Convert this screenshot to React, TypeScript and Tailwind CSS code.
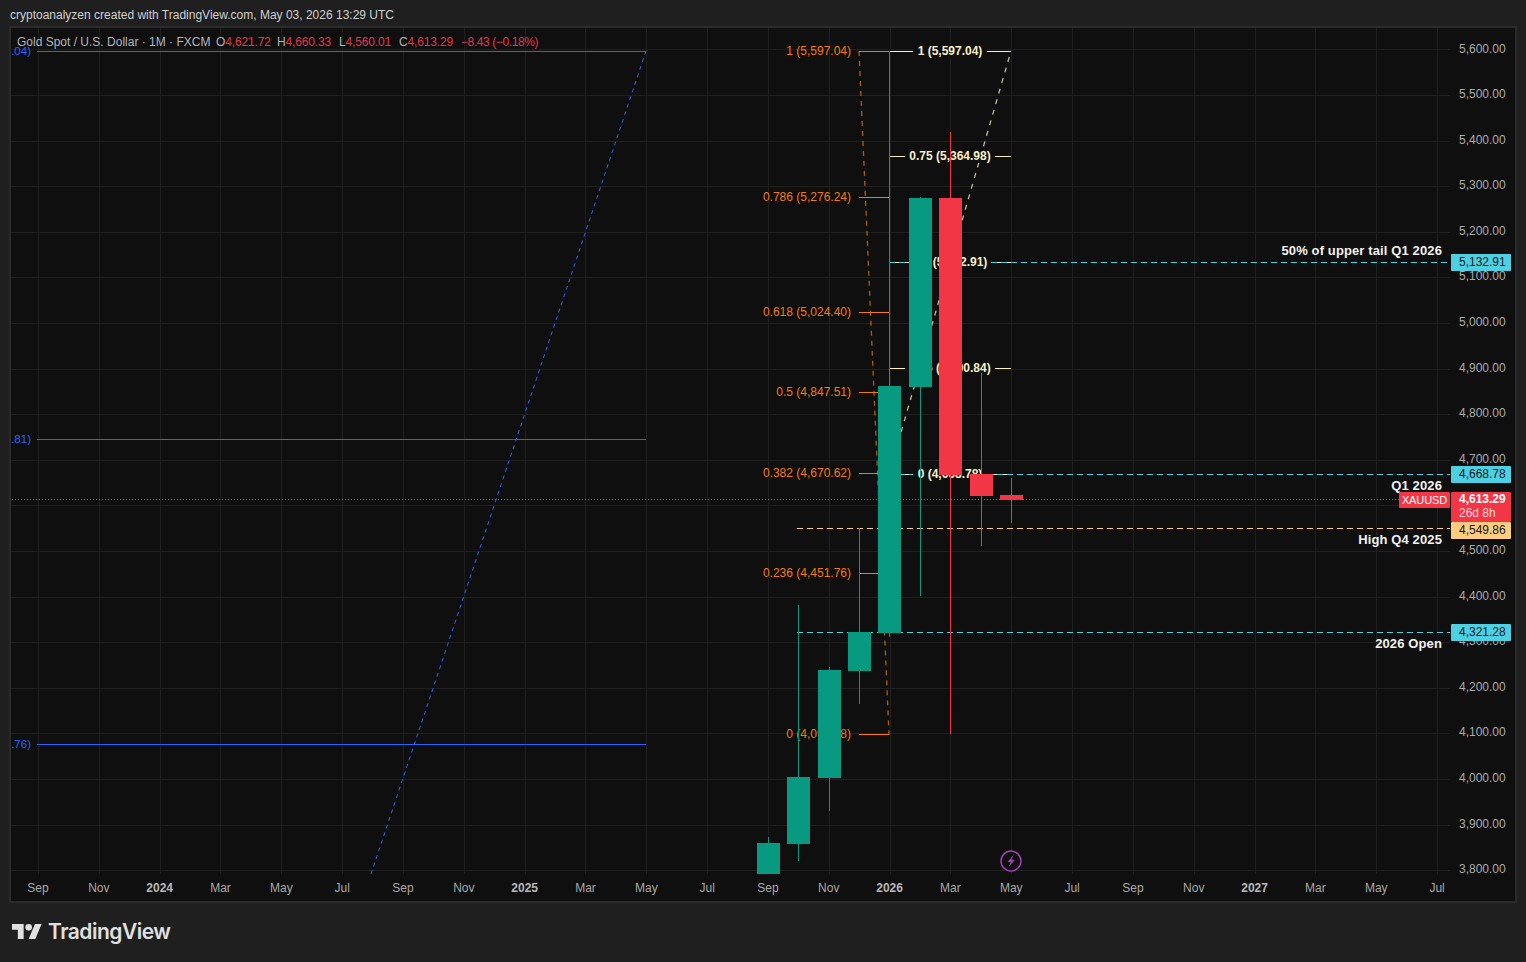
const FONT = "font-['Liberation_Sans',Arial,sans-serif]";

const prices = ['5,600.00','5,500.00','5,400.00','5,300.00','5,200.00','5,100.00','5,000.00','4,900.00','4,800.00','4,700.00','4,600.00','4,500.00','4,400.00','4,300.00','4,200.00','4,100.00','4,000.00','3,900.00','3,800.00'];
const months = ['Sep','Nov','2024','Mar','May','Jul','Sep','Nov','2025','Mar','May','Jul','Sep','Nov','2026','Mar','May','Jul','Sep','Nov','2027','Mar','May','Jul'];

const GREEN = '#089981';
const RED = '#f23645';
const ORANGE = '#f57c00';
const CREAM = '#f7f1c8';
const CYAN = '#4dd0e1';
const BLUE = '#2962ff';

// x, wick top, wick bottom, body top, body bottom
const candles = [
  { x: 768, wt: 837, wb: 874, bt: 843, bb: 874, c: GREEN },
  { x: 798, wt: 605, wb: 861, bt: 777, bb: 844, c: GREEN },
  { x: 829, wt: 667, wb: 811, bt: 670, bb: 778, c: GREEN },
  { x: 859, wt: 528, wb: 704, bt: 632, bb: 671, c: GREEN },
  { x: 889, wt: 51, wb: 637, bt: 386, bb: 633, c: GREEN },
  { x: 920, wt: 197, wb: 596, bt: 198, bb: 387, c: GREEN },
  { x: 950, wt: 132, wb: 734, bt: 198, bb: 475, c: RED },
  { x: 981, wt: 373, wb: 546, bt: 474, bb: 496, c: RED },
  { x: 1011, wt: 478, wb: 523, bt: 495, bb: 500, c: RED },
];

const orangeFib = [
  { y: 51, t: '1 (5,597.04)' },
  { y: 197, t: '0.786 (5,276.24)' },
  { y: 312, t: '0.618 (5,024.40)' },
  { y: 392, t: '0.5 (4,847.51)' },
  { y: 473, t: '0.382 (4,670.62)' },
  { y: 573, t: '0.236 (4,451.76)' },
  { y: 734, t: '0 (4,097.98)' },
];

const creamFib = [
  { y: 51, t: '1 (5,597.04)', a: 913, b: 987 },
  { y: 156, t: '0.75 (5,364.98)', a: 905, b: 995 },
  { y: 262, t: '0.5 (5,132.91)', a: 909, b: 991 },
  { y: 368, t: '0.25 (4,900.84)', a: 905, b: 995 },
  { y: 474, t: '0 (4,668.78)', a: 913, b: 987 },
];

const notes = [
  { y: 250, t: '50% of upper tail Q1 2026' },
  { y: 485, t: 'Q1 2026' },
  { y: 539, t: 'High Q4 2025' },
  { y: 643, t: '2026 Open' },
];

function Chart() {
  return (
    <svg width="1439" height="846" viewBox="11 28 1439 846" className="block">
      <g stroke="#1f1f1f" strokeWidth="1" shapeRendering="crispEdges">
        {prices.map((_, i) => {
          const y = Math.round(49.3 + i * 45.6) + 0.5;
          return <line key={i} x1="11" x2="1450" y1={y} y2={y} />;
        })}
        {months.map((_, i) => {
          const x = Math.round(38 + i * 60.83) + 0.5;
          return <line key={i} x1={x} x2={x} y1="28" y2="874" />;
        })}
      </g>

      {/* left fib */}
      <g stroke={BLUE} strokeWidth="1">
        <line x1="37" x2="646" y1="51.5" y2="51.5" shapeRendering="crispEdges" />
        <line x1="37" x2="646" y1="439.5" y2="439.5" shapeRendering="crispEdges" />
        <line x1="37" x2="646" y1="744.5" y2="744.5" shapeRendering="crispEdges" />
        <line x1="371" y1="874" x2="646" y2="51" strokeDasharray="4 4" />
      </g>
      <g fill={BLUE} fontSize="11.5" textAnchor="end" dominantBaseline="central">
        <text x="31" y="51">.04)</text>
        <text x="31" y="439">.81)</text>
        <text x="31" y="744">.76)</text>
      </g>

      <line x1="12" x2="1450" y1="499.5" y2="499.5" stroke={RED} strokeDasharray="1 2" shapeRendering="crispEdges" />

      {/* orange fib */}
      <line x1="859" y1="51" x2="889" y2="734" stroke={ORANGE} strokeOpacity="0.7" strokeWidth="1.3" strokeDasharray="5 5" />
      {orangeFib.map((f) => (
        <g key={f.y}>
          <line x1="859" x2="889" y1={f.y + 0.5} y2={f.y + 0.5} stroke={ORANGE} shapeRendering="crispEdges" />
          <text x="851" y={f.y} fill={ORANGE} fontSize="12" textAnchor="end" dominantBaseline="central">{f.t}</text>
        </g>
      ))}

      {/* cream fib */}
      <line x1="889" y1="474" x2="1011" y2="51" stroke={CREAM} strokeOpacity="0.75" strokeWidth="1.3" strokeDasharray="5 6" />
      {creamFib.map((f) => (
        <g key={f.y}>
          <rect x={f.a} y={f.y - 7} width={f.b - f.a} height="14" fill="#0f0f0f" />
          <line x1="889" x2={f.a} y1={f.y + 0.5} y2={f.y + 0.5} stroke={CREAM} shapeRendering="crispEdges" />
          <line x1={f.b} x2="1011" y1={f.y + 0.5} y2={f.y + 0.5} stroke={CREAM} shapeRendering="crispEdges" />
          <text x="950" y={f.y} fill={CREAM} fontSize="12" fontWeight="700" textAnchor="middle" dominantBaseline="central">{f.t}</text>
        </g>
      ))}

      {/* levels */}
      <g strokeDasharray="6 4" shapeRendering="crispEdges">
        <line x1="889" x2="909" y1="262.5" y2="262.5" stroke={CYAN} />
        <line x1="991" x2="1450" y1="262.5" y2="262.5" stroke={CYAN} />
        <line x1="889" x2="913" y1="474.5" y2="474.5" stroke={CYAN} />
        <line x1="987" x2="1450" y1="474.5" y2="474.5" stroke={CYAN} />
        <line x1="797" x2="1450" y1="632.5" y2="632.5" stroke={CYAN} />
        <line x1="797" x2="1450" y1="528.5" y2="528.5" stroke="#ffcc80" />
      </g>

      {candles.map((k) => (
        <g key={k.x} shapeRendering="crispEdges">
          <rect x={k.x} y={k.wt} width="1" height={k.wb - k.wt} fill={k.c} />
          <rect x={k.x - 11} y={k.bt} width="23" height={k.bb - k.bt} fill={k.c} />
        </g>
      ))}

      {notes.map((n) => (
        <text key={n.y} x="1442" y={n.y} fill="#f2f2f2" fontSize="13" fontWeight="700" letterSpacing="0.12" textAnchor="end" dominantBaseline="central">{n.t}</text>
      ))}

      {/* dividend marker */}
      <circle cx="1011" cy="861" r="10" fill="#0f0f0f" stroke="#a340b5" strokeWidth="1.5" />
      <path d="M1013.6 855l-6.2 7h3.2l-2 5 6.2-7h-3.2z" fill="#a340b5" />
    </svg>
  );
}

function Tag({ className, children }: { className: string; children: React.ReactNode }) {
  return <div className={`absolute left-[1440px] w-[60px] rounded-[1px] pl-2 text-xs leading-[17px] ${className}`}>{children}</div>;
}

export default function App() {
  return (
    <div className={`flex h-[962px] w-[1526px] flex-col overflow-hidden bg-[#1f1f1f] ${FONT}`}>
      <div className="flex h-[26px] shrink-0 items-center pl-2.5 pt-[3px] text-xs text-[#cfcfcf]">
        cryptoanalyzen created with TradingView.com, May 03, 2026 13:29 UTC
      </div>

      <div className="relative ml-[9px] h-[877px] w-[1508px] shrink-0 border-2 border-[#2b2b2b] bg-[#0f0f0f]">
        <div className="flex h-[846px]">
          <div className="relative w-[1439px] shrink-0">
            <Chart />
            <div className="absolute left-[6px] top-[7px] flex h-[14px] items-center text-xs leading-[14px] text-[#b2b5be]">
              <span className="w-[199px]">Gold Spot / U.S. Dollar · 1M · FXCM</span>
              <span className="w-[61px] tracking-[-0.15px]">O<span className="text-[#e0384a]">4,621.72</span></span>
              <span className="w-[62px] tracking-[-0.15px]">H<span className="text-[#e0384a]">4,660.33</span></span>
              <span className="w-[60px] tracking-[-0.15px]">L<span className="text-[#e0384a]">4,560.01</span></span>
              <span className="w-[62px] tracking-[-0.15px]">C<span className="text-[#e0384a]">4,613.29</span></span>
              <span className="tracking-[-0.4px] text-[#e0384a]">−8.43 (−0.18%)</span>
            </div>
          </div>
          <div className="flex w-[65px] shrink-0 flex-col gap-[30.6px] pl-[9px] pt-[13.5px] text-xs leading-[15px] text-[#ababab]">
            {prices.map((p) => (
              <div key={p} className="h-[15px] shrink-0">{p === '4,600.00' ? '' : p}</div>
            ))}
          </div>
        </div>

        <div className="ml-[-3.4px] flex h-[27px] items-center text-xs text-[#a8a8a8]">
          {months.map((m, i) => (
            <div key={i} className={`w-[60.83px] shrink-0 text-center ${/^20/.test(m) ? 'font-bold text-[#b8b8b8]' : ''}`}>{m}</div>
          ))}
        </div>

        <Tag className="top-[226px] bg-[#4dd0e1] text-[#131722]">5,132.91</Tag>
        <Tag className="top-[438px] bg-[#4dd0e1] text-[#131722]">4,668.78</Tag>
        <div className="absolute left-[1388px] top-[464px] w-[51px] rounded-[1px] bg-[#f23645] text-center text-[11px] leading-[16px] tracking-[-0.1px] text-white">XAUUSD</div>
        <div className="absolute left-[1440px] top-[464px] h-[30px] w-[60px] rounded-[1px] bg-[#f23645] pl-2 text-xs leading-[14px] text-white">
          <div className="font-bold">4,613.29</div>
          <div className="text-[#ffd5d9]">26d 8h</div>
        </div>
        <Tag className="top-[494px] bg-[#ffcc80] text-[#131722]">4,549.86</Tag>
        <Tag className="top-[596px] bg-[#4dd0e1] text-[#131722]">4,321.28</Tag>
      </div>

      <div className="flex flex-1 items-center gap-[6px] pb-[2px] pl-3 text-[#e0e0e0]">
        <svg width="30" height="15" viewBox="0 4 36 18" fill="#e0e0e0">
          <path d="M14 22H7V11H0V4h14v18zM28 22h-8l7.5-18h8L28 22z" />
          <circle cx="20" cy="8" r="4" />
        </svg>
        <span className="font-['Inter',sans-serif] text-[21px] font-semibold tracking-[-0.5px]">TradingView</span>
      </div>
    </div>
  );
}
